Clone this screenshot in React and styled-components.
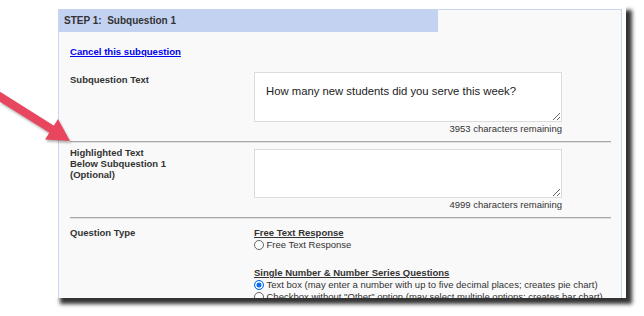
import React from 'react';
import styled, { createGlobalStyle } from 'styled-components';

const GlobalStyle = createGlobalStyle`
  body {
    margin: 0;
    background: #fff;
    font-family: "Liberation Sans", Arial, sans-serif;
  }
`;

const Page = styled.div`
  position: relative;
  width: 644px;
  height: 316px;
  box-sizing: border-box;
  padding: 4px 0 0 54px;
  overflow: hidden;
`;

const Frame = styled.div`
  width: 572px;
  height: 294px;
  box-sizing: border-box;
  padding: 5px 4px 0 4px;
  background: #fff;
  box-shadow: 6px 6px 4px rgba(0, 0, 0, 0.8);
  overflow: hidden;
`;

const Panel = styled.div`
  border: 1px solid #c7d6f2;
  background: #f9f9f9;
`;

const Header = styled.div`
  width: 379px;
  height: 22px;
  line-height: 22px;
  padding-left: 5px;
  box-sizing: border-box;
  background: #c3d2f0;
  color: #333;
  font-size: 10px;
  font-weight: bold;
`;

const Body = styled.div`
  padding: 0 10px 20px 11px;
  color: #333;
`;

const CancelLink = styled.a`
  display: inline-block;
  margin-top: 14px;
  font-size: 9.6px;
  line-height: 12px;
  font-weight: bold;
  color: #0000ee;
  text-decoration: underline;
`;

const Row = styled.div`
  display: grid;
  grid-template-columns: 184px 308px;
  margin-top: ${(p) => p.$top}px;
`;

const Label = styled.div`
  margin-top: ${(p) => p.$offset || 0}px;
  font-size: 9.5px;
  line-height: ${(p) => p.$lh || 11}px;
  font-weight: bold;
  color: #333;
`;

const Field = styled.div`
  display: flex;
  flex-direction: column;
`;

const TextBox = styled.textarea`
  display: block;
  width: 308px;
  height: ${(p) => p.$h}px;
  box-sizing: border-box;
  margin: 0;
  padding: 12px 11px;
  border: 1px solid #dcdcdc;
  background: #fff;
  font-family: inherit;
  font-size: 11.3px;
  line-height: 13px;
  color: #222;
  resize: vertical;
  outline: none;
`;

const Counter = styled.div`
  margin-top: 1px;
  text-align: right;
  font-size: 9.5px;
  line-height: 12px;
  color: #333;
`;

const Divider = styled.div`
  margin-top: 6px;
  border-top: 1px solid #a8a8a8;
  border-bottom: 1px solid #e2e2e2;
`;

const Group = styled.div`
  margin-top: ${(p) => (p.$first ? 0 : 16)}px;
`;

const GroupTitle = styled.div`
  font-size: 9.5px;
  line-height: 12px;
  font-weight: bold;
  text-decoration: underline;
  color: #333;
`;

const Option = styled.div`
  display: flex;
  align-items: center;
  gap: 2.5px;
  font-size: 9.5px;
  line-height: 12px;
  color: #333;
  white-space: nowrap;
`;

const Radio = styled.span`
  flex: none;
  width: 10px;
  height: 10px;
  box-sizing: border-box;
  border-radius: 50%;
  border: 1px solid ${(p) => (p.$checked ? '#0a6cf0' : '#666')};
  background: ${(p) => (p.$checked ? '#0a6cf0' : '#fff')};
  box-shadow: ${(p) => (p.$checked ? 'inset 0 0 0 1.5px #fff' : 'none')};
`;

const Arrow = styled.svg`
  position: absolute;
  left: 0;
  top: 0;
  width: 80px;
  height: 150px;
  pointer-events: none;
  filter: drop-shadow(1px 2px 1px rgba(0, 0, 0, 0.3));
`;

const App = () => {
  return (
    <Page>
      <GlobalStyle />
      <Frame>
        <Panel>
          <Header>STEP 1:&nbsp; Subquestion 1</Header>
          <Body>
            <CancelLink href="#">Cancel this subquestion</CancelLink>

            <Row $top={13}>
              <Label $offset={2}>Subquestion Text</Label>
              <Field>
                <TextBox
                  $h={50}
                  readOnly
                  value="How many new students did you serve this week?"
                />
                <Counter>3953 characters remaining</Counter>
              </Field>
            </Row>
            <Divider />

            <Row $top={6}>
              <Label $offset={-2}>
                Highlighted Text
                <br />
                Below Subquestion 1
                <br />
                (Optional)
              </Label>
              <Field>
                <TextBox $h={49} readOnly value="" />
                <Counter>4999 characters remaining</Counter>
              </Field>
            </Row>
            <Divider />

            <Row $top={8}>
              <Label $lh={12}>Question Type</Label>
              <Field>
                <Group $first>
                  <GroupTitle>Free Text Response</GroupTitle>
                  <Option>
                    <Radio />
                    Free Text Response
                  </Option>
                </Group>
                <Group>
                  <GroupTitle>Single Number &amp; Number Series Questions</GroupTitle>
                  <Option>
                    <Radio $checked />
                    Text box (may enter a number with up to five decimal places; creates pie chart)
                  </Option>
                  <Option>
                    <Radio />
                    Checkbox without "Other" option (may select multiple options; creates bar chart)
                  </Option>
                </Group>
              </Field>
            </Row>
          </Body>
        </Panel>
      </Frame>
      <Arrow viewBox="0 0 80 150">
        <line x1="-6" y1="93" x2="53" y2="130" stroke="#e8455f" strokeWidth="8.5" />
        <polygon points="70,141 45,139.5 58,119" fill="#e8455f" />
      </Arrow>
    </Page>
  );
};

export default App;
